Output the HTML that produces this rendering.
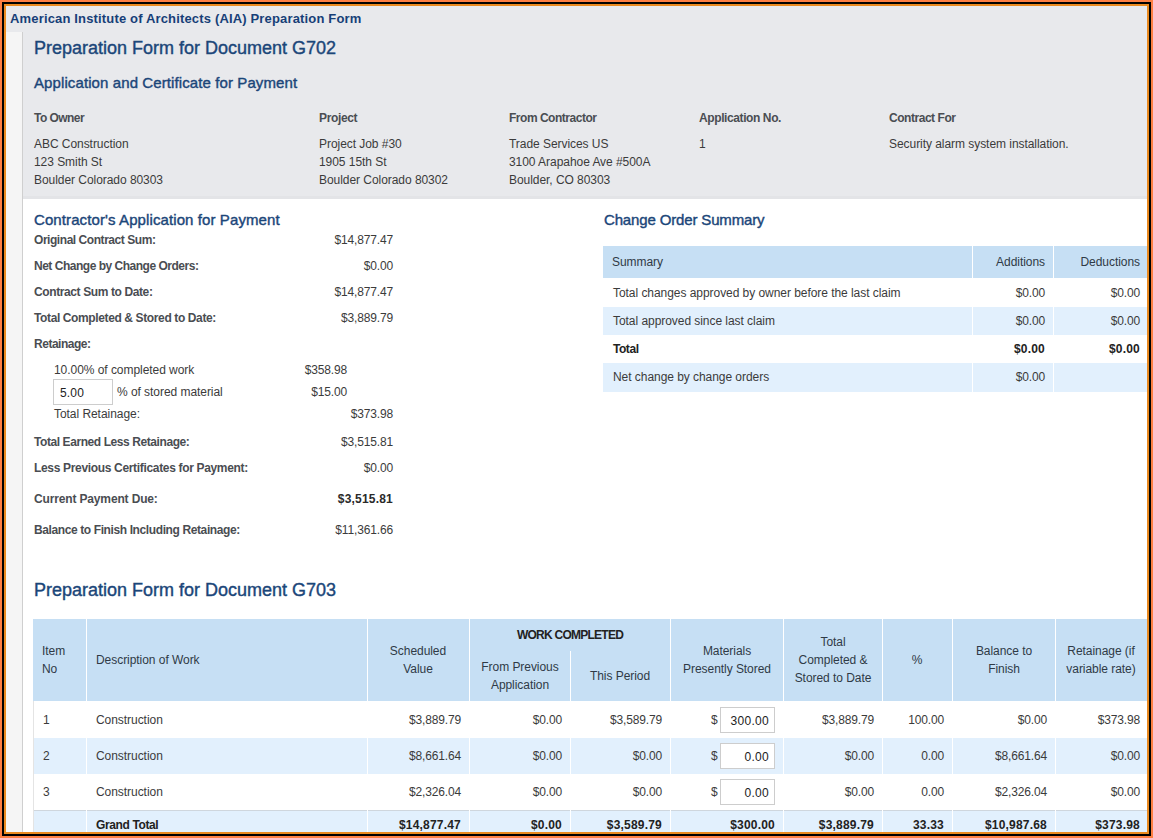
<!DOCTYPE html>
<html><head><meta charset="utf-8"><style>
html,body{margin:0;padding:0;width:1153px;height:838px;overflow:hidden;background:#fff;}
body{position:relative;font-family:"Liberation Sans",sans-serif;}
.r{position:absolute;}
.t{position:absolute;white-space:nowrap;}
</style></head><body>
<div class="r" style="left:0px;top:0px;width:1153px;height:838px;background:#fd7f43;"></div>
<div class="r" style="left:2px;top:2px;width:1149px;height:834px;background:#000;"></div>
<div class="r" style="left:4px;top:4px;width:1145px;height:830px;background:#ea8a20;"></div>
<div class="r" style="left:6px;top:6px;width:1141px;height:826px;background:#ffffff;"></div>
<div class="r" style="left:6px;top:6px;width:1141px;height:193px;background:#e8e9ec;"></div>
<div class="r" style="left:6px;top:196px;width:1141px;height:3px;background:#e3e4e7;"></div>
<div class="r" style="left:6px;top:32px;width:16px;height:800px;background:#f5f5f5;"></div>
<div class="r" style="left:22px;top:32px;width:1px;height:800px;background:#cfcfcf;"></div>
<div class="t" style="top:12.23px;font-size:13px;font-weight:bold;color:#173f78;line-height:14.521px;letter-spacing:0.16px;left:10px;">American Institute of Architects (AIA) Preparation Form</div>
<div class="t" style="top:37.71px;font-size:18px;font-weight:normal;color:#1b4679;line-height:20.106px;-webkit-text-stroke:0.4px #1b4679;left:34px;">Preparation Form for Document G702</div>
<div class="t" style="top:75.42px;font-size:15px;font-weight:normal;color:#1b4679;line-height:16.755px;letter-spacing:0.1px;-webkit-text-stroke:0.4px #1b4679;left:34px;">Application and Certificate for Payment</div>
<div class="t" style="top:112.14px;font-size:12px;font-weight:bold;color:#4a4d52;line-height:13.404px;letter-spacing:-0.55px;left:34px;">To Owner</div>
<div class="t" style="top:138.14px;font-size:12px;font-weight:normal;color:#3b3b3b;line-height:13.404px;letter-spacing:-0.05px;left:34px;">ABC Construction</div>
<div class="t" style="top:156.14px;font-size:12px;font-weight:normal;color:#3b3b3b;line-height:13.404px;letter-spacing:-0.05px;left:34px;">123 Smith St</div>
<div class="t" style="top:174.14px;font-size:12px;font-weight:normal;color:#3b3b3b;line-height:13.404px;letter-spacing:-0.05px;left:34px;">Boulder Colorado 80303</div>
<div class="t" style="top:112.14px;font-size:12px;font-weight:bold;color:#4a4d52;line-height:13.404px;letter-spacing:-0.35px;left:319px;">Project</div>
<div class="t" style="top:138.14px;font-size:12px;font-weight:normal;color:#3b3b3b;line-height:13.404px;letter-spacing:-0.05px;left:319px;">Project Job #30</div>
<div class="t" style="top:156.14px;font-size:12px;font-weight:normal;color:#3b3b3b;line-height:13.404px;letter-spacing:-0.05px;left:319px;">1905 15th St</div>
<div class="t" style="top:174.14px;font-size:12px;font-weight:normal;color:#3b3b3b;line-height:13.404px;letter-spacing:-0.05px;left:319px;">Boulder Colorado 80302</div>
<div class="t" style="top:112.14px;font-size:12px;font-weight:bold;color:#4a4d52;line-height:13.404px;letter-spacing:-0.48px;left:509px;">From Contractor</div>
<div class="t" style="top:138.14px;font-size:12px;font-weight:normal;color:#3b3b3b;line-height:13.404px;letter-spacing:-0.05px;left:509px;">Trade Services US</div>
<div class="t" style="top:156.14px;font-size:12px;font-weight:normal;color:#3b3b3b;line-height:13.404px;letter-spacing:-0.05px;left:509px;">3100 Arapahoe Ave #500A</div>
<div class="t" style="top:174.14px;font-size:12px;font-weight:normal;color:#3b3b3b;line-height:13.404px;letter-spacing:-0.05px;left:509px;">Boulder, CO 80303</div>
<div class="t" style="top:112.14px;font-size:12px;font-weight:bold;color:#4a4d52;line-height:13.404px;letter-spacing:-0.4px;left:699px;">Application No.</div>
<div class="t" style="top:138.14px;font-size:12px;font-weight:normal;color:#3b3b3b;line-height:13.404px;letter-spacing:-0.15px;left:699px;">1</div>
<div class="t" style="top:112.14px;font-size:12px;font-weight:bold;color:#4a4d52;line-height:13.404px;letter-spacing:-0.46px;left:889px;">Contract For</div>
<div class="t" style="top:138.14px;font-size:12px;font-weight:normal;color:#3b3b3b;line-height:13.404px;letter-spacing:-0.05px;left:889px;">Security alarm system installation.</div>
<div class="t" style="top:212.43px;font-size:15px;font-weight:normal;color:#1b4679;line-height:16.755px;letter-spacing:0.1px;-webkit-text-stroke:0.4px #1b4679;left:34px;">Contractor's Application for Payment</div>
<div class="t" style="top:234.14px;font-size:12px;font-weight:bold;color:#4a4d52;line-height:13.404px;letter-spacing:-0.45px;left:34px;">Original Contract Sum:</div>
<div class="t" style="top:234.14px;font-size:12px;font-weight:normal;color:#3b3b3b;line-height:13.404px;letter-spacing:-0.15px;right:760px;text-align:right;">$14,877.47</div>
<div class="t" style="top:260.14px;font-size:12px;font-weight:bold;color:#4a4d52;line-height:13.404px;letter-spacing:-0.486px;left:34px;">Net Change by Change Orders:</div>
<div class="t" style="top:260.14px;font-size:12px;font-weight:normal;color:#3b3b3b;line-height:13.404px;letter-spacing:-0.15px;right:760px;text-align:right;">$0.00</div>
<div class="t" style="top:286.14px;font-size:12px;font-weight:bold;color:#4a4d52;line-height:13.404px;letter-spacing:-0.39px;left:34px;">Contract Sum to Date:</div>
<div class="t" style="top:286.14px;font-size:12px;font-weight:normal;color:#3b3b3b;line-height:13.404px;letter-spacing:-0.15px;right:760px;text-align:right;">$14,877.47</div>
<div class="t" style="top:312.14px;font-size:12px;font-weight:bold;color:#4a4d52;line-height:13.404px;letter-spacing:-0.38px;left:34px;">Total Completed &amp; Stored to Date:</div>
<div class="t" style="top:312.14px;font-size:12px;font-weight:normal;color:#3b3b3b;line-height:13.404px;letter-spacing:-0.15px;right:760px;text-align:right;">$3,889.79</div>
<div class="t" style="top:338.14px;font-size:12px;font-weight:bold;color:#4a4d52;line-height:13.404px;letter-spacing:-0.48px;left:34px;">Retainage:</div>
<div class="t" style="top:364.14px;font-size:12px;font-weight:normal;color:#3b3b3b;line-height:13.404px;letter-spacing:-0.05px;left:54px;">10.00% of completed work</div>
<div class="t" style="top:364.14px;font-size:12px;font-weight:normal;color:#3b3b3b;line-height:13.404px;letter-spacing:-0.15px;right:806px;text-align:right;">$358.98</div>
<div class="r" style="left:53px;top:379px;width:60px;height:26px;background:#fff;box-sizing:border-box;border:1px solid #cdcdcd;"></div>
<div class="t" style="top:387.14px;font-size:12px;font-weight:normal;color:#222;line-height:13.404px;letter-spacing:0.15px;left:60px;">5.00</div>
<div class="t" style="top:386.14px;font-size:12px;font-weight:normal;color:#3b3b3b;line-height:13.404px;letter-spacing:-0.05px;left:117px;">% of stored material</div>
<div class="t" style="top:386.14px;font-size:12px;font-weight:normal;color:#3b3b3b;line-height:13.404px;letter-spacing:-0.15px;right:806px;text-align:right;">$15.00</div>
<div class="t" style="top:408.14px;font-size:12px;font-weight:normal;color:#3b3b3b;line-height:13.404px;letter-spacing:-0.05px;left:54px;">Total Retainage:</div>
<div class="t" style="top:408.14px;font-size:12px;font-weight:normal;color:#3b3b3b;line-height:13.404px;letter-spacing:-0.15px;right:760px;text-align:right;">$373.98</div>
<div class="t" style="top:436.14px;font-size:12px;font-weight:bold;color:#4a4d52;line-height:13.404px;letter-spacing:-0.42px;left:34px;">Total Earned Less Retainage:</div>
<div class="t" style="top:436.14px;font-size:12px;font-weight:normal;color:#3b3b3b;line-height:13.404px;letter-spacing:-0.15px;right:760px;text-align:right;">$3,515.81</div>
<div class="t" style="top:462.14px;font-size:12px;font-weight:bold;color:#4a4d52;line-height:13.404px;letter-spacing:-0.33px;left:34px;">Less Previous Certificates for Payment:</div>
<div class="t" style="top:462.14px;font-size:12px;font-weight:normal;color:#3b3b3b;line-height:13.404px;letter-spacing:-0.15px;right:760px;text-align:right;">$0.00</div>
<div class="t" style="top:493.14px;font-size:12px;font-weight:bold;color:#4a4d52;line-height:13.404px;letter-spacing:-0.15px;left:34px;">Current Payment Due:</div>
<div class="t" style="top:493.14px;font-size:12px;font-weight:bold;color:#2a2a2a;line-height:13.404px;letter-spacing:0.2px;right:760px;text-align:right;">$3,515.81</div>
<div class="t" style="top:524.14px;font-size:12px;font-weight:bold;color:#4a4d52;line-height:13.404px;letter-spacing:-0.39px;left:34px;">Balance to Finish Including Retainage:</div>
<div class="t" style="top:524.14px;font-size:12px;font-weight:normal;color:#3b3b3b;line-height:13.404px;letter-spacing:-0.15px;right:760px;text-align:right;">$11,361.66</div>
<div class="t" style="top:212.43px;font-size:15px;font-weight:normal;color:#1b4679;line-height:16.755px;letter-spacing:-0.15px;-webkit-text-stroke:0.4px #1b4679;left:604px;">Change Order Summary</div>
<div class="r" style="left:603px;top:246px;width:544px;height:32px;background:#c6dff4;"></div>
<div class="r" style="left:603px;top:307px;width:544px;height:28px;background:#e2f0fd;"></div>
<div class="r" style="left:603px;top:363px;width:544px;height:29px;background:#e2f0fd;"></div>
<div class="r" style="left:972px;top:246px;width:1px;height:146px;background:#ffffff;"></div>
<div class="r" style="left:1053px;top:246px;width:1px;height:146px;background:#ffffff;"></div>
<div class="t" style="top:256.14px;font-size:12px;font-weight:normal;color:#2f3a46;line-height:13.404px;letter-spacing:-0.05px;left:612px;">Summary</div>
<div class="t" style="top:256.14px;font-size:12px;font-weight:normal;color:#2f3a46;line-height:13.404px;letter-spacing:-0.05px;right:108px;text-align:right;">Additions</div>
<div class="t" style="top:256.14px;font-size:12px;font-weight:normal;color:#2f3a46;line-height:13.404px;letter-spacing:-0.05px;right:13px;text-align:right;">Deductions</div>
<div class="t" style="top:287.14px;font-size:12px;font-weight:normal;color:#3b3b3b;line-height:13.404px;letter-spacing:-0.05px;left:613px;">Total changes approved by owner before the last claim</div>
<div class="t" style="top:287.14px;font-size:12px;font-weight:normal;color:#3b3b3b;line-height:13.404px;letter-spacing:-0.15px;right:108px;text-align:right;">$0.00</div>
<div class="t" style="top:287.14px;font-size:12px;font-weight:normal;color:#3b3b3b;line-height:13.404px;letter-spacing:-0.15px;right:13px;text-align:right;">$0.00</div>
<div class="t" style="top:315.14px;font-size:12px;font-weight:normal;color:#3b3b3b;line-height:13.404px;letter-spacing:-0.05px;left:613px;">Total approved since last claim</div>
<div class="t" style="top:315.14px;font-size:12px;font-weight:normal;color:#3b3b3b;line-height:13.404px;letter-spacing:-0.15px;right:108px;text-align:right;">$0.00</div>
<div class="t" style="top:315.14px;font-size:12px;font-weight:normal;color:#3b3b3b;line-height:13.404px;letter-spacing:-0.15px;right:13px;text-align:right;">$0.00</div>
<div class="t" style="top:343.14px;font-size:12px;font-weight:bold;color:#222;line-height:13.404px;letter-spacing:-0.45px;left:613px;">Total</div>
<div class="t" style="top:343.14px;font-size:12px;font-weight:bold;color:#222;line-height:13.404px;letter-spacing:0.2px;right:108px;text-align:right;">$0.00</div>
<div class="t" style="top:343.14px;font-size:12px;font-weight:bold;color:#222;line-height:13.404px;letter-spacing:0.2px;right:13px;text-align:right;">$0.00</div>
<div class="t" style="top:371.14px;font-size:12px;font-weight:normal;color:#3b3b3b;line-height:13.404px;letter-spacing:-0.05px;left:613px;">Net change by change orders</div>
<div class="t" style="top:371.14px;font-size:12px;font-weight:normal;color:#3b3b3b;line-height:13.404px;letter-spacing:-0.15px;right:108px;text-align:right;">$0.00</div>
<div class="t" style="top:579.71px;font-size:18px;font-weight:normal;color:#1b4679;line-height:20.106px;-webkit-text-stroke:0.4px #1b4679;left:34px;">Preparation Form for Document G703</div>
<div class="r" style="left:33px;top:619px;width:1114px;height:82px;background:#c6dff4;"></div>
<div class="r" style="left:33px;top:738px;width:1114px;height:36px;background:#e2f0fd;"></div>
<div class="r" style="left:33px;top:810px;width:1114px;height:1px;background:#cfd6dd;"></div>
<div class="r" style="left:33px;top:811px;width:1114px;height:21px;background:#e2f0fd;"></div>
<div class="r" style="left:33px;top:701px;width:1px;height:131px;background:#e4e4e4;"></div>
<div class="r" style="left:86px;top:619px;width:1px;height:213px;background:#ffffff;"></div>
<div class="r" style="left:367px;top:619px;width:1px;height:213px;background:#ffffff;"></div>
<div class="r" style="left:469px;top:619px;width:1px;height:213px;background:#ffffff;"></div>
<div class="r" style="left:570px;top:651px;width:1px;height:181px;background:#ffffff;"></div>
<div class="r" style="left:670px;top:619px;width:1px;height:213px;background:#ffffff;"></div>
<div class="r" style="left:783px;top:619px;width:1px;height:213px;background:#ffffff;"></div>
<div class="r" style="left:882px;top:619px;width:1px;height:213px;background:#ffffff;"></div>
<div class="r" style="left:952px;top:619px;width:1px;height:213px;background:#ffffff;"></div>
<div class="r" style="left:1055px;top:619px;width:1px;height:213px;background:#ffffff;"></div>
<div class="t" style="top:645.14px;font-size:12px;font-weight:normal;color:#2f3a46;line-height:13.404px;letter-spacing:-0.05px;left:42px;">Item</div>
<div class="t" style="top:663.14px;font-size:12px;font-weight:normal;color:#2f3a46;line-height:13.404px;letter-spacing:-0.05px;left:42px;">No</div>
<div class="t" style="top:654.14px;font-size:12px;font-weight:normal;color:#2f3a46;line-height:13.404px;letter-spacing:-0.05px;left:96px;">Description of Work</div>
<div class="t" style="top:645.14px;font-size:12px;font-weight:normal;color:#2f3a46;line-height:13.404px;letter-spacing:-0.05px;left:118px;width:600px;text-align:center;">Scheduled</div>
<div class="t" style="top:663.14px;font-size:12px;font-weight:normal;color:#2f3a46;line-height:13.404px;letter-spacing:-0.05px;left:118px;width:600px;text-align:center;">Value</div>
<div class="t" style="top:629.14px;font-size:12px;font-weight:bold;color:#222;line-height:13.404px;letter-spacing:-0.75px;left:270px;width:600px;text-align:center;">WORK COMPLETED</div>
<div class="t" style="top:661.14px;font-size:12px;font-weight:normal;color:#2f3a46;line-height:13.404px;letter-spacing:-0.05px;left:220px;width:600px;text-align:center;">From Previous</div>
<div class="t" style="top:679.14px;font-size:12px;font-weight:normal;color:#2f3a46;line-height:13.404px;letter-spacing:-0.05px;left:220px;width:600px;text-align:center;">Application</div>
<div class="t" style="top:670.14px;font-size:12px;font-weight:normal;color:#2f3a46;line-height:13.404px;letter-spacing:-0.05px;left:320px;width:600px;text-align:center;">This Period</div>
<div class="t" style="top:645.14px;font-size:12px;font-weight:normal;color:#2f3a46;line-height:13.404px;letter-spacing:-0.05px;left:427px;width:600px;text-align:center;">Materials</div>
<div class="t" style="top:663.14px;font-size:12px;font-weight:normal;color:#2f3a46;line-height:13.404px;letter-spacing:-0.05px;left:427px;width:600px;text-align:center;">Presently Stored</div>
<div class="t" style="top:636.14px;font-size:12px;font-weight:normal;color:#2f3a46;line-height:13.404px;letter-spacing:-0.05px;left:533px;width:600px;text-align:center;">Total</div>
<div class="t" style="top:654.14px;font-size:12px;font-weight:normal;color:#2f3a46;line-height:13.404px;letter-spacing:-0.05px;left:533px;width:600px;text-align:center;">Completed &amp;</div>
<div class="t" style="top:672.14px;font-size:12px;font-weight:normal;color:#2f3a46;line-height:13.404px;letter-spacing:-0.05px;left:533px;width:600px;text-align:center;">Stored to Date</div>
<div class="t" style="top:654.14px;font-size:12px;font-weight:normal;color:#2f3a46;line-height:13.404px;letter-spacing:-0.05px;left:617px;width:600px;text-align:center;">%</div>
<div class="t" style="top:645.14px;font-size:12px;font-weight:normal;color:#2f3a46;line-height:13.404px;letter-spacing:-0.05px;left:704px;width:600px;text-align:center;">Balance to</div>
<div class="t" style="top:663.14px;font-size:12px;font-weight:normal;color:#2f3a46;line-height:13.404px;letter-spacing:-0.05px;left:704px;width:600px;text-align:center;">Finish</div>
<div class="t" style="top:645.14px;font-size:12px;font-weight:normal;color:#2f3a46;line-height:13.404px;letter-spacing:-0.05px;left:801px;width:600px;text-align:center;">Retainage (if</div>
<div class="t" style="top:663.14px;font-size:12px;font-weight:normal;color:#2f3a46;line-height:13.404px;letter-spacing:-0.05px;left:801px;width:600px;text-align:center;">variable rate)</div>
<div class="t" style="top:714.14px;font-size:12px;font-weight:normal;color:#3b3b3b;line-height:13.404px;letter-spacing:-0.15px;left:43px;">1</div>
<div class="t" style="top:714.14px;font-size:12px;font-weight:normal;color:#3b3b3b;line-height:13.404px;letter-spacing:-0.05px;left:96px;">Construction</div>
<div class="t" style="top:714.14px;font-size:12px;font-weight:normal;color:#3b3b3b;line-height:13.404px;letter-spacing:-0.15px;right:692px;text-align:right;">$3,889.79</div>
<div class="t" style="top:714.14px;font-size:12px;font-weight:normal;color:#3b3b3b;line-height:13.404px;letter-spacing:-0.15px;right:591px;text-align:right;">$0.00</div>
<div class="t" style="top:714.14px;font-size:12px;font-weight:normal;color:#3b3b3b;line-height:13.404px;letter-spacing:-0.15px;right:491px;text-align:right;">$3,589.79</div>
<div class="t" style="top:714.14px;font-size:12px;font-weight:normal;color:#3b3b3b;line-height:13.404px;letter-spacing:-0.15px;left:711px;">$</div>
<div class="r" style="left:720px;top:707px;width:55px;height:26px;background:#fff;box-sizing:border-box;border:1px solid #cdcdcd;"></div>
<div class="t" style="top:715.14px;font-size:12px;font-weight:normal;color:#222;line-height:13.404px;letter-spacing:0.3px;right:384px;text-align:right;">300.00</div>
<div class="t" style="top:714.14px;font-size:12px;font-weight:normal;color:#3b3b3b;line-height:13.404px;letter-spacing:-0.15px;right:279px;text-align:right;">$3,889.79</div>
<div class="t" style="top:714.14px;font-size:12px;font-weight:normal;color:#3b3b3b;line-height:13.404px;letter-spacing:-0.15px;right:209px;text-align:right;">100.00</div>
<div class="t" style="top:714.14px;font-size:12px;font-weight:normal;color:#3b3b3b;line-height:13.404px;letter-spacing:-0.15px;right:106px;text-align:right;">$0.00</div>
<div class="t" style="top:714.14px;font-size:12px;font-weight:normal;color:#3b3b3b;line-height:13.404px;letter-spacing:-0.15px;right:13px;text-align:right;">$373.98</div>
<div class="t" style="top:750.14px;font-size:12px;font-weight:normal;color:#3b3b3b;line-height:13.404px;letter-spacing:-0.15px;left:43px;">2</div>
<div class="t" style="top:750.14px;font-size:12px;font-weight:normal;color:#3b3b3b;line-height:13.404px;letter-spacing:-0.05px;left:96px;">Construction</div>
<div class="t" style="top:750.14px;font-size:12px;font-weight:normal;color:#3b3b3b;line-height:13.404px;letter-spacing:-0.15px;right:692px;text-align:right;">$8,661.64</div>
<div class="t" style="top:750.14px;font-size:12px;font-weight:normal;color:#3b3b3b;line-height:13.404px;letter-spacing:-0.15px;right:591px;text-align:right;">$0.00</div>
<div class="t" style="top:750.14px;font-size:12px;font-weight:normal;color:#3b3b3b;line-height:13.404px;letter-spacing:-0.15px;right:491px;text-align:right;">$0.00</div>
<div class="t" style="top:750.14px;font-size:12px;font-weight:normal;color:#3b3b3b;line-height:13.404px;letter-spacing:-0.15px;left:711px;">$</div>
<div class="r" style="left:720px;top:743px;width:55px;height:26px;background:#fff;box-sizing:border-box;border:1px solid #cdcdcd;"></div>
<div class="t" style="top:751.14px;font-size:12px;font-weight:normal;color:#222;line-height:13.404px;letter-spacing:0.3px;right:384px;text-align:right;">0.00</div>
<div class="t" style="top:750.14px;font-size:12px;font-weight:normal;color:#3b3b3b;line-height:13.404px;letter-spacing:-0.15px;right:279px;text-align:right;">$0.00</div>
<div class="t" style="top:750.14px;font-size:12px;font-weight:normal;color:#3b3b3b;line-height:13.404px;letter-spacing:-0.15px;right:209px;text-align:right;">0.00</div>
<div class="t" style="top:750.14px;font-size:12px;font-weight:normal;color:#3b3b3b;line-height:13.404px;letter-spacing:-0.15px;right:106px;text-align:right;">$8,661.64</div>
<div class="t" style="top:750.14px;font-size:12px;font-weight:normal;color:#3b3b3b;line-height:13.404px;letter-spacing:-0.15px;right:13px;text-align:right;">$0.00</div>
<div class="t" style="top:786.14px;font-size:12px;font-weight:normal;color:#3b3b3b;line-height:13.404px;letter-spacing:-0.15px;left:43px;">3</div>
<div class="t" style="top:786.14px;font-size:12px;font-weight:normal;color:#3b3b3b;line-height:13.404px;letter-spacing:-0.05px;left:96px;">Construction</div>
<div class="t" style="top:786.14px;font-size:12px;font-weight:normal;color:#3b3b3b;line-height:13.404px;letter-spacing:-0.15px;right:692px;text-align:right;">$2,326.04</div>
<div class="t" style="top:786.14px;font-size:12px;font-weight:normal;color:#3b3b3b;line-height:13.404px;letter-spacing:-0.15px;right:591px;text-align:right;">$0.00</div>
<div class="t" style="top:786.14px;font-size:12px;font-weight:normal;color:#3b3b3b;line-height:13.404px;letter-spacing:-0.15px;right:491px;text-align:right;">$0.00</div>
<div class="t" style="top:786.14px;font-size:12px;font-weight:normal;color:#3b3b3b;line-height:13.404px;letter-spacing:-0.15px;left:711px;">$</div>
<div class="r" style="left:720px;top:779px;width:55px;height:26px;background:#fff;box-sizing:border-box;border:1px solid #cdcdcd;"></div>
<div class="t" style="top:787.14px;font-size:12px;font-weight:normal;color:#222;line-height:13.404px;letter-spacing:0.3px;right:384px;text-align:right;">0.00</div>
<div class="t" style="top:786.14px;font-size:12px;font-weight:normal;color:#3b3b3b;line-height:13.404px;letter-spacing:-0.15px;right:279px;text-align:right;">$0.00</div>
<div class="t" style="top:786.14px;font-size:12px;font-weight:normal;color:#3b3b3b;line-height:13.404px;letter-spacing:-0.15px;right:209px;text-align:right;">0.00</div>
<div class="t" style="top:786.14px;font-size:12px;font-weight:normal;color:#3b3b3b;line-height:13.404px;letter-spacing:-0.15px;right:106px;text-align:right;">$2,326.04</div>
<div class="t" style="top:786.14px;font-size:12px;font-weight:normal;color:#3b3b3b;line-height:13.404px;letter-spacing:-0.15px;right:13px;text-align:right;">$0.00</div>
<div class="t" style="top:819.14px;font-size:12px;font-weight:bold;color:#222;line-height:13.404px;letter-spacing:-0.38px;left:96px;">Grand Total</div>
<div class="t" style="top:819.14px;font-size:12px;font-weight:bold;color:#222;line-height:13.404px;letter-spacing:0.2px;right:692px;text-align:right;">$14,877.47</div>
<div class="t" style="top:819.14px;font-size:12px;font-weight:bold;color:#222;line-height:13.404px;letter-spacing:0.2px;right:591px;text-align:right;">$0.00</div>
<div class="t" style="top:819.14px;font-size:12px;font-weight:bold;color:#222;line-height:13.404px;letter-spacing:0.2px;right:491px;text-align:right;">$3,589.79</div>
<div class="t" style="top:819.14px;font-size:12px;font-weight:bold;color:#222;line-height:13.404px;letter-spacing:0.2px;right:378px;text-align:right;">$300.00</div>
<div class="t" style="top:819.14px;font-size:12px;font-weight:bold;color:#222;line-height:13.404px;letter-spacing:0.2px;right:279px;text-align:right;">$3,889.79</div>
<div class="t" style="top:819.14px;font-size:12px;font-weight:bold;color:#222;line-height:13.404px;letter-spacing:0.2px;right:209px;text-align:right;">33.33</div>
<div class="t" style="top:819.14px;font-size:12px;font-weight:bold;color:#222;line-height:13.404px;letter-spacing:0.2px;right:106px;text-align:right;">$10,987.68</div>
<div class="t" style="top:819.14px;font-size:12px;font-weight:bold;color:#222;line-height:13.404px;letter-spacing:0.2px;right:13px;text-align:right;">$373.98</div>
</body></html>
